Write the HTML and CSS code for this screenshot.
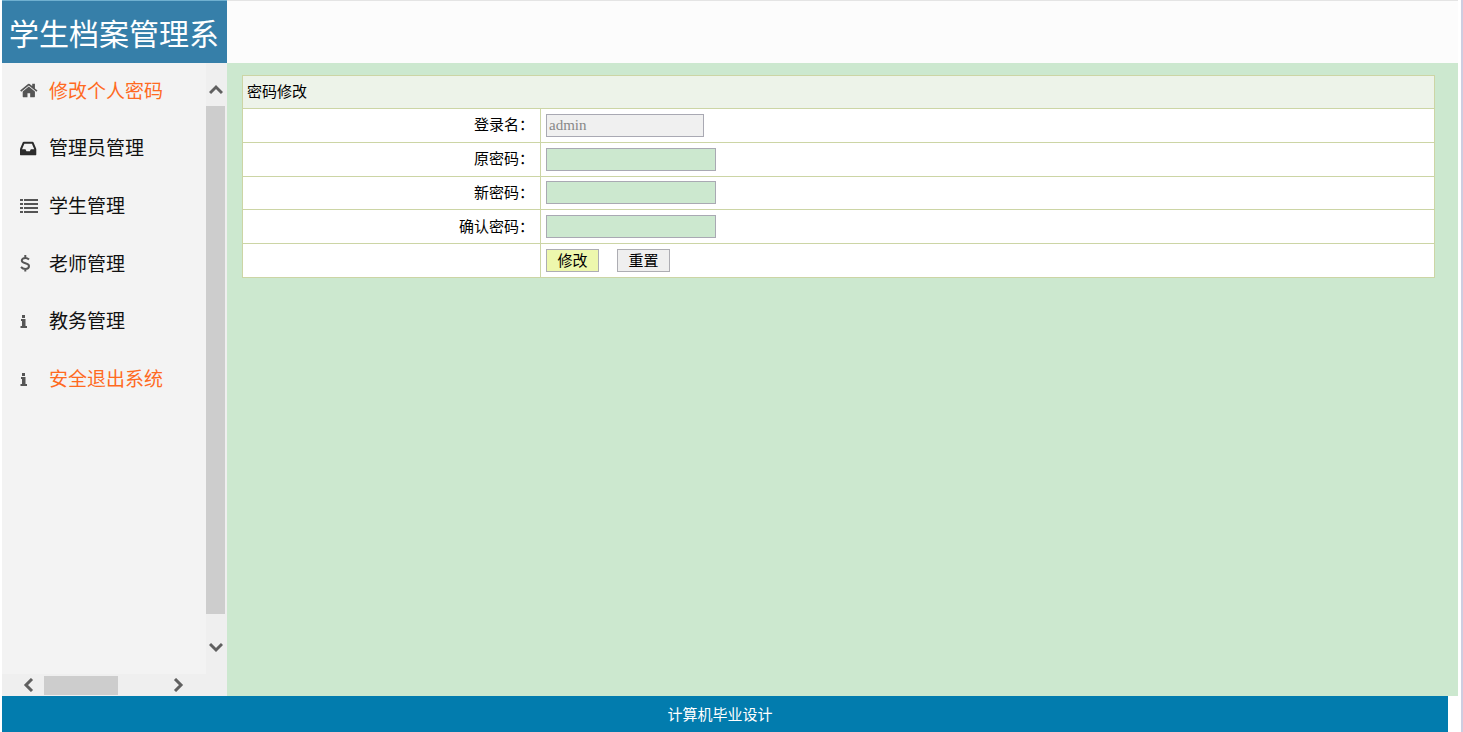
FILE: index.html
```html
<!DOCTYPE html>
<html lang="zh-CN">
<head>
<meta charset="utf-8">
<title>学生档案管理系统</title>
<link rel="stylesheet" href="styles.css">
</head>
<body>
<div class="page">
  <header class="header"><h1 class="brand">学生档案管理系</h1></header>
  <div class="body">
    <aside class="sidebar">
      <nav class="menu">
        <a class="item accent" href="#"><svg class="icon" viewBox="64 0 1792 1792"><path d="M1472 992v480q0 26-19 45t-45 19h-384v-384h-256v384h-384q-26 0-45-19t-19-45v-480q0-1 .5-3t.5-3l575-474 575 474q1 2 1 6zm223-69l-62 74q-8 9-21 11h-3q-13 0-21-7l-692-577-692 577q-12 8-24 7-13-2-21-11l-62-74q-8-10-7-23.500t11-21.500l719-599q32-26 76-26t76 26l244 204v-195q0-14 9-23t23-9h192q14 0 23 9t9 23v408l219 182q10 8 11 21.500t-7 23.500z"/></svg>修改个人密码</a>
        <a class="item" href="#"><svg class="icon dark" viewBox="128 0 1792 1792"><path d="M1151 960h316q-1-3-2.500-8t-2.500-8l-212-496h-708l-212 496q-1 2-2.500 8t-2.500 8h316l95 192h320zm513 30v482q0 26-19 45t-45 19h-1408q-26 0-45-19t-19-45v-482q0-62 25-123l238-552q10-25 36.500-42t52.500-17h832q26 0 52.500 17t36.500 42l238 552q25 61 25 123z"/></svg>管理员管理</a>
        <a class="item" href="#"><svg class="icon" viewBox="0 0 19 19"><path d="M0 2h3v2H0zM4 2h14v2H4zM0 6h3v2H0zM4 6h14v2H4zM0 10h3v2H0zM4 10h14v2H4zM0 14h3v2H0zM4 14h14v2H4z"/></svg>学生管理</a>
        <a class="item" href="#"><svg class="icon line" viewBox="0 0 19 19"><path d="M9 5.500Q7.500 4 5.300 4C3 4 1.800 5 1.800 6.500c0 3.500 7.200 2 7.200 5.500C9 13.800 7.500 15 5.300 15 3.500 15 2.200 14.300 1 13M5.300 1v3M5.300 15v2.500"/></svg>老师管理</a>
        <a class="item" href="#"><svg class="icon" viewBox="0 0 19 19"><path d="M2 3h3v3H2zM1 7h4.500v7H7v2H.5v-2H2V9H1z"/></svg>教务管理</a>
        <a class="item accent" href="#"><svg class="icon" viewBox="0 0 19 19"><path d="M2 3h3v3H2zM1 7h4.500v7H7v2H.5v-2H2V9H1z"/></svg>安全退出系统</a>
      </nav>
      <div class="vbar">
        <svg class="arrow" viewBox="0 0 14 14"><path d="M1 10 7 4 13 10"/></svg>
        <div class="vthumb"></div>
        <svg class="arrow" viewBox="0 0 14 14"><path d="M1 3 7 9 13 3"/></svg>
      </div>
      <div class="hbar">
        <svg class="arrow" viewBox="0 0 14 14"><path d="M10 1 4 7 10 13"/></svg>
        <div class="hthumb"></div>
        <svg class="arrow" viewBox="0 0 14 14"><path d="M3 1 9 7 3 13"/></svg>
      </div>
    </aside>
    <main class="content">
      <form>
        <table class="grid">
          <colgroup><col class="label-col"><col></colgroup>
          <thead><tr><th colspan="2">密码修改</th></tr></thead>
          <tbody>
            <tr><td class="label"><label for="login">登录名：</label></td><td><input class="field login" id="login" type="text" value="admin" disabled></td></tr>
            <tr><td class="label"><label for="old">原密码：</label></td><td><input class="field" id="old" type="password"></td></tr>
            <tr><td class="label"><label for="new">新密码：</label></td><td><input class="field" id="new" type="password"></td></tr>
            <tr><td class="label"><label for="confirm">确认密码：</label></td><td><input class="field" id="confirm" type="password"></td></tr>
            <tr><td class="label"></td><td><div class="buttons"><button class="btn primary" type="button">修改</button><button class="btn" type="reset">重置</button></div></td></tr>
          </tbody>
        </table>
      </form>
    </main>
  </div>
  <footer class="footer">计算机毕业设计</footer>
</div>
</body>
</html>
```
FILE: styles.css
```css
* { box-sizing: border-box; }
body {
  margin: 0;
  background: #fff;
  color: #000;
  font: 15px/20px "Liberation Sans", "Noto Sans CJK SC", sans-serif;
}
.page {
  display: flex;
  flex-direction: column;
  min-height: 100vh;
  padding: 0 3px 0 2px;
  border-right: 2px solid #cdcde0;
}
.header {
  display: flex;
  height: 63px;
  background: #fcfcfc;
  border-top: 1px solid #e4e4e4;
}
.brand {
  width: 225px;
  height: 63px;
  margin: -1px 0 0;
  padding-left: 7px;
  background: #367fa9;
  border-top: 1px solid #6fb0d0;
  color: #fff;
  font-size: 30px;
  font-weight: 400;
  line-height: 68px;
  white-space: nowrap;
}
.body { display: flex; flex: 1; }
.sidebar {
  display: grid;
  grid-template: 1fr 22px / 1fr 21px;
  width: 225px;
  background: #f3f3f3;
}
.menu {
  display: grid;
  grid-auto-rows: 1fr;
  height: 346px;
}
.item {
  display: flex;
  align-items: center;
  gap: 10px;
  padding-left: 18px;
  color: #111;
  font-size: 19px;
  line-height: 28px;
  text-decoration: none;
  white-space: nowrap;
}
.accent { color: #ff6a1f; }
.icon { width: 19px; height: 19px; margin-bottom: 2px; fill: #555; }
.dark { fill: #2b2b2b; }
.line { fill: none; stroke: #555; stroke-width: 2; }
.arrow { width: 14px; height: 14px; flex: none; fill: none; stroke: #606060; stroke-width: 3; }
.vbar {
  grid-row: 1 / 3;
  grid-column: 2;
  display: flex;
  flex-direction: column;
  align-items: center;
  gap: 9px;
  padding: 20px 2px 41px 0;
  background: #efefef;
}
.vthumb { flex: 1; width: 19px; margin-bottom: 18px; background: #cdcdcd; }
.hbar {
  grid-row: 2;
  grid-column: 1;
  display: flex;
  align-items: center;
  gap: 8px;
  padding: 0 20px;
  background: #efefef;
}
.hthumb { width: 74px; height: 19px; margin-right: auto; background: #cdcdcd; }
.content {
  flex: 1;
  padding: 12px 23px 12px 15px;
  background: #cce8cf;
}
.grid {
  width: 100%;
  height: 203px;
  table-layout: fixed;
  border-collapse: collapse;
  background: #fff;
}
.label-col { width: 25%; }
.grid th, .grid td {
  height: 33px;
  padding: 0 5px;
  border: 1px solid #ccd5a5;
  text-align: left;
  vertical-align: middle;
  font-weight: 400;
}
.grid th { padding: 0 4px; background: #edf3e9; }
.grid .label { padding-right: 6px; text-align: right; }
.field {
  display: block;
  width: 170px;
  height: 23px;
  padding: 1px 2px;
  border: 1px solid #a9a9b3;
  background: #cce8cf;
  font: 15px "Liberation Serif", serif;
}
.login { width: 158px; background: #f0f0f0; color: #888; }
.buttons { display: flex; gap: 18px; }
.btn {
  width: 53px;
  height: 23px;
  padding: 0;
  border: 1px solid #adadb3;
  background: #efefef;
  color: #000;
  font: 15px/20px "Liberation Sans", "Noto Sans CJK SC", sans-serif;
}
.primary { background: #edf7ad; }
.footer {
  margin-right: 10px;
  padding: 2px 10px 0 0;
  background: #027cae;
  color: #fff;
  line-height: 34px;
  text-align: center;
}
```
